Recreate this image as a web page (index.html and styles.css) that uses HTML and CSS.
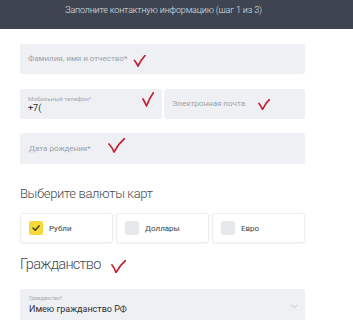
FILE: index.html
```html
<!DOCTYPE html>
<html lang="ru">
<head>
<meta charset="utf-8">
<link rel="stylesheet" href="styles.css">
</head>
<body>
<header class="topbar">
  <div class="topbar-title">Заполните контактную информацию (шаг 1 из 3)</div>
</header>
<main class="form">
  <div class="field field-full">
    <span class="placeholder">Фамилия, имя и отчество*</span>
    <svg class="mark mark-fio" viewBox="0 0 12 12"><path d="M1 5.5 Q3 8 4.5 11 Q7.5 5 11.5 0.5"/></svg>
  </div>
  <div class="row">
    <div class="field field-phone">
      <span class="label">Мобильный телефон*</span>
      <span class="value">+7(</span>
      <svg class="mark mark-phone" viewBox="0 0 12 15"><path d="M1 7 Q3 10.5 4.5 14 Q7.5 6 11.5 0.5"/></svg>
    </div>
    <div class="field field-email">
      <span class="placeholder">Электронная почта</span>
      <svg class="mark mark-email" viewBox="0 0 12 11"><path d="M1 4.5 Q3 7 4.5 10.5 Q7.5 4 11.5 0.5"/></svg>
    </div>
  </div>
  <div class="field field-full field-date">
    <span class="placeholder">Дата рождения*</span>
    <svg class="mark mark-date" viewBox="0 0 17 15"><path d="M1 6 Q4 9 6 14 Q10 6 16.5 0.5"/></svg>
  </div>
  <h2 class="section-title">Выберите валюты карт</h2>
  <div class="cards">
    <label class="card"><span class="box box-on"><svg viewBox="0 0 10 10"><path d="M2 5 L4.2 7.2 L8.2 2.8"/></svg></span><span class="card-text">Рубли</span></label>
    <label class="card"><span class="box"></span><span class="card-text">Доллары</span></label>
    <label class="card"><span class="box"></span><span class="card-text">Евро</span></label>
  </div>
  <h2 class="section-title section-big">Гражданство<svg class="mark-inline" viewBox="0 0 15 13"><path d="M1 5 Q3.5 8 5 12.5 Q9 5 14.5 0.5"/></svg></h2>
  <div class="field field-full field-select">
    <span class="label">Гражданство*</span>
    <span class="value">Имею гражданство РФ</span>
    <svg class="chevron" viewBox="0 0 8 5"><path d="M0.5 0.5 L4 4 L7.5 0.5"/></svg>
  </div>
</main>
</body>
</html>
```

FILE: styles.css
```css
* { box-sizing: border-box; }
html, body { margin: 0; padding: 0; background: #ffffff; }
body {
  font-family: Roboto, "Noto Sans", "Liberation Sans", sans-serif;
  color: #333;
  width: 353px;
  height: 320px;
  overflow: hidden;
}
.topbar {
  height: 29px;
  background: #3e4450;
  display: flex;
  justify-content: center;
  padding-top: 5px;
  padding-right: 26px;
}
.topbar-title {
  color: #dfe2e7;
  font-size: 9px;
  line-height: 11px;
  font-weight: 300;
  letter-spacing: -0.15px;
}
.form {
  width: 285px;
  margin-left: 20px;
  display: flex;
  flex-direction: column;
}
.field {
  position: relative;
  background: #eef0f3;
  border-radius: 3px;
  display: flex;
  flex-direction: column;
  justify-content: center;
  padding-left: 8px;
}
.field-full { height: 30px; margin-top: 15px; }
.row {
  display: flex;
  gap: 2px;
  margin-top: 15px;
}
.field-phone { width: 142px; height: 30px; padding-left: 8px; }
.field-email { flex: 1; height: 30px; }
.field-date { height: 31px; margin-top: 14px; padding-left: 9px; }
.placeholder {
  font-size: 8px;
  color: #9ba1a9;
  line-height: 10px;
}
.label {
  font-size: 6.2px;
  color: #a4a9b0;
  line-height: 8px;
}
.value {
  font-size: 9px;
  color: #2b2f36;
  line-height: 11px;
}
.mark {
  position: absolute;
  fill: none;
  stroke: #c22135;
  stroke-width: 1.7;
  stroke-linecap: round;
  stroke-linejoin: round;
}
.mark-fio { left: 113px; top: 11px; width: 13px; height: 12px; }
.mark-phone { left: 122px; top: 3px; width: 12px; height: 15px; }
.mark-email { left: 94px; top: 10px; width: 12px; height: 11px; }
.mark-date { left: 88px; top: 5px; width: 17px; height: 15px; }
.section-title {
  margin: 21px 0 0;
  font-size: 13px;
  line-height: 17px;
  font-weight: 300;
  color: #444a52;
  letter-spacing: -0.35px;
}
.section-big {
  font-size: 14.5px;
  line-height: 19px;
  margin-top: 12px;
  letter-spacing: -0.7px;
  display: flex;
  align-items: flex-start;
}
.mark-inline {
  width: 15px;
  height: 13px;
  margin-left: 10px;
  margin-top: 5px;
  fill: none;
  stroke: #c22135;
  stroke-width: 1.7;
  stroke-linecap: round;
  stroke-linejoin: round;
}
.cards {
  display: grid;
  grid-template-columns: 93px 93px 1fr;
  gap: 3px;
  margin-top: 11px;
}
.card {
  height: 30px;
  background: #fff;
  border: 1px solid #eceef1;
  border-radius: 3px;
  box-shadow: 0 1px 2px rgba(0, 0, 0, 0.05);
  display: flex;
  align-items: center;
  padding-left: 8px;
  gap: 6px;
}
.box {
  width: 14px;
  height: 14px;
  border-radius: 2px;
  background: #e6e7e9;
  display: flex;
  align-items: center;
  justify-content: center;
}
.box-on { background: #f7d83a; }
.box-on svg {
  width: 10px;
  height: 10px;
  fill: none;
  stroke: #3a3420;
  stroke-width: 1.3;
  stroke-linecap: round;
  stroke-linejoin: round;
}
.card-text {
  font-size: 8px;
  color: #3a3f46;
}
.field-select {
  height: 34px;
  margin-top: 15px;
  justify-content: flex-start;
  padding-top: 6px;
  padding-left: 9px;
  border-radius: 3px 3px 0 0;
}
.field-select .label { font-size: 5px; line-height: 7px; }
.field-select .value { margin-top: 2px; }
.chevron {
  position: absolute;
  right: 7px;
  top: 15px;
  width: 7px;
  height: 5px;
  fill: none;
  stroke: #b6bbc2;
  stroke-width: 1;
}
```
